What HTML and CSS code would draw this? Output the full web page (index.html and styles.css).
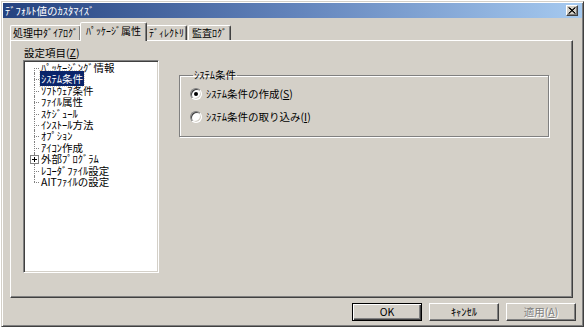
FILE: index.html
```html
<!DOCTYPE html>
<html lang="ja">
<head>
    <meta charset="UTF-8">
    <title>ﾃﾞﾌｫﾙﾄ値のｶｽﾀﾏｲｽﾞ</title>
    <link rel="stylesheet" href="styles.css">
</head>
<body>
    <div class="window">
        <div class="titlebar">
            <span class="title">ﾃﾞﾌｫﾙﾄ値のｶｽﾀﾏｲｽﾞ</span>
            <button class="close-btn" type="button">
                <svg width="8" height="7" viewBox="0 0 8 7">
                    <path d="M0.5 0.5 L7 6.5 M1.5 0.5 L7.5 6.5 M7 0.5 L0.5 6.5 M7.5 0.5 L1 6.5" stroke="#000" stroke-width="1"/>
                </svg>
            </button>
        </div>

        <div class="dialog-body">
            <div class="tabs">
                <div class="tab tab-dialog">処理中ﾀﾞｲｱﾛｸﾞ</div>
                <div class="tab tab-package active">ﾊﾟｯｹｰｼﾞ属性</div>
                <div class="tab tab-dir">ﾃﾞｨﾚｸﾄﾘ</div>
                <div class="tab tab-log">監査ﾛｸﾞ</div>
            </div>

            <div class="panel">
                <div class="left-col">
                    <div class="field-label">設定項目(<u>Z</u>)</div>
                    <div class="tree-box">
                        <ul class="tree">
                            <li>ﾊﾟｯｹｰｼﾞﾝｸﾞ情報</li>
                            <li><span class="selected">ｼｽﾃﾑ条件</span></li>
                            <li>ｿﾌﾄｳｪｱ条件</li>
                            <li>ﾌｧｲﾙ属性</li>
                            <li>ｽｹｼﾞｭｰﾙ</li>
                            <li>ｲﾝｽﾄｰﾙ方法</li>
                            <li>ｵﾌﾟｼｮﾝ</li>
                            <li>ｱｲｺﾝ作成</li>
                            <li><span class="expander"></span>外部ﾌﾟﾛｸﾞﾗﾑ</li>
                            <li>ﾚｺｰﾀﾞﾌｧｲﾙ設定</li>
                            <li>AITﾌｧｲﾙの設定</li>
                        </ul>
                    </div>
                </div>

                <fieldset class="group">
                    <legend>ｼｽﾃﾑ条件</legend>
                    <label class="radio-row">
                        <span class="radio checked"></span>
                        <span>ｼｽﾃﾑ条件の作成(<u>S</u>)</span>
                    </label>
                    <label class="radio-row">
                        <span class="radio"></span>
                        <span>ｼｽﾃﾑ条件の取り込み(<u>I</u>)</span>
                    </label>
                </fieldset>
            </div>

            <div class="footer">
                <button class="btn default" type="button">OK</button>
                <button class="btn" type="button">ｷｬﾝｾﾙ</button>
                <button class="btn" type="button" disabled>適用(<u>A</u>)</button>
            </div>
        </div>
    </div>
</body>
</html>
```

FILE: styles.css
```css
* {
    margin: 0;
    padding: 0;
    box-sizing: border-box;
}

body {
    font-family: "Noto Sans CJK JP", "DejaVu Sans", sans-serif;
    font-size: 10.5px;
    color: #000;
    background: #fff;
}

u {
    text-decoration: underline;
    text-underline-offset: 1px;
}

.window {
    margin: 1px 0 0 1px;
    width: 583px;
    height: 326px;
    background: #d4d0c8;
    border: 1px solid;
    border-color: #d4d0c8 #404040 #404040 #d4d0c8;
    box-shadow: inset 1px 1px 0 #fff, inset -1px -1px 0 #808080;
    padding: 1px;
    display: flex;
    flex-direction: column;
}

/* title bar */
.titlebar {
    height: 15px;
    background: linear-gradient(to right, #24427f 0%, #6283bb 50%, #a6caf0 100%);
    display: flex;
    align-items: center;
    justify-content: space-between;
    padding: 0 4px 0 2px;
}

.title {
    color: #fff;
    font-size: 10.5px;
    line-height: 15px;
}

.close-btn {
    width: 12px;
    height: 11px;
    background: #d4d0c8;
    border: 1px solid;
    border-color: #fff #404040 #404040 #fff;
    box-shadow: inset -1px -1px 0 #808080;
    display: flex;
    align-items: center;
    justify-content: center;
}

.close-btn svg {
    display: block;
}

/* dialog */
.dialog-body {
    flex: 1;
    padding: 4px 9px 0 7px;
    display: flex;
    flex-direction: column;
}

.tabs {
    display: flex;
    align-items: flex-end;
    height: 18px;
}

.tab {
    height: 15px;
    line-height: 14px;
    font-size: 10px;
    text-align: center;
    border: 1px solid;
    border-bottom: none;
    border-color: #fff #404040 transparent #fff;
    box-shadow: inset -1px 0 0 #808080;
    border-radius: 2px 2px 0 0;
    white-space: nowrap;
}

.tab-dialog { width: 71px; }
.tab-package { width: 65px; }
.tab-dir { width: 41px; }
.tab-log { width: 43px; margin-left: 1px; }

.tab.active {
    position: relative;
    z-index: 1;
    width: 67px;
    height: 19px;
    line-height: 16px;
    margin: 0 -1px -1px -1px;
    background: #d4d0c8;
}

.panel {
    height: 258px;
    border: 1px solid;
    border-color: #fff #404040 #404040 #fff;
    box-shadow: inset -1px -1px 0 #808080;
    padding: 5px 0 0 12px;
    display: flex;
    gap: 20px;
}

.left-col {
    width: 136px;
}

.field-label {
    height: 14px;
    line-height: 13px;
    padding-left: 1px;
}

.tree-box {
    height: 213px;
    background: #fff;
    border: 1px solid;
    border-color: #808080 #fff #fff #808080;
    box-shadow: inset 1px 1px 0 #404040, inset -1px -1px 0 #d4d0c8;
    padding: 1px 0 0 2px;
}

.tree {
    list-style: none;
}

.tree li {
    position: relative;
    height: 11.4px;
    line-height: 11.4px;
    padding-left: 15px;
    white-space: nowrap;
}

.tree li::before {
    content: "";
    position: absolute;
    left: 8px;
    top: 6px;
    width: 5px;
    border-top: 1px dotted #808080;
}

.tree li::after {
    content: "";
    position: absolute;
    left: 8px;
    top: 0;
    bottom: 0;
    border-left: 1px dotted #808080;
}

.tree li:first-child::after {
    top: 6px;
}

.tree li:last-child::after {
    bottom: auto;
    height: 6px;
}

.selected {
    background: #0a246a;
    color: #fff;
    padding: 0 1px;
    margin-left: -1px;
    outline: 1px dotted #d4d0c8;
}

/* plus box of a collapsed node */
.expander {
    position: absolute;
    z-index: 1;
    left: 4px;
    top: 2px;
    width: 9px;
    height: 9px;
    border: 1px solid #808080;
    background: #fff;
}

.expander::before,
.expander::after {
    content: "";
    position: absolute;
    background: #000;
}

.expander::before {
    left: 1px;
    top: 3px;
    width: 5px;
    height: 1px;
}

.expander::after {
    left: 3px;
    top: 1px;
    width: 1px;
    height: 5px;
}

/* group box */
.group {
    margin-top: 23px;
    width: 370px;
    height: 68px;
    border: 1px solid #808080;
    box-shadow: inset 1px 1px 0 #fff, 1px 1px 0 #fff;
    padding: 1px 0 0 10px;
}

.group legend {
    padding: 0 1px;
    margin-left: 3px;
    line-height: 12px;
}

.radio-row {
    display: flex;
    align-items: center;
    gap: 4px;
    height: 23px;
}

.radio {
    width: 12px;
    height: 12px;
    border-radius: 50%;
    background: #fff;
    border: 1px solid;
    border-color: #808080 #fff #fff #808080;
    box-shadow: inset 1px 1px 0 #404040, inset -1px -1px 0 #d4d0c8;
    display: flex;
    align-items: center;
    justify-content: center;
}

.radio.checked::after {
    content: "";
    width: 4px;
    height: 4px;
    border-radius: 50%;
    background: #000;
}

/* buttons */
.footer {
    display: flex;
    justify-content: flex-end;
    gap: 7px;
    margin: 5px -3px 0 0;
}

.btn {
    width: 70px;
    height: 18px;
    font-family: inherit;
    font-size: 10.5px;
    line-height: 14px;
    background: #d4d0c8;
    color: #000;
    border: 1px solid;
    border-color: #fff #404040 #404040 #fff;
    box-shadow: inset -1px -1px 0 #808080;
}

.btn.default {
    border: 1px solid #000;
    box-shadow: inset 1px 1px 0 #fff, inset -1px -1px 0 #404040, inset -2px -2px 0 #808080;
}

.btn:disabled {
    color: #808080;
    text-shadow: 1px 1px 0 #fff;
}
```
